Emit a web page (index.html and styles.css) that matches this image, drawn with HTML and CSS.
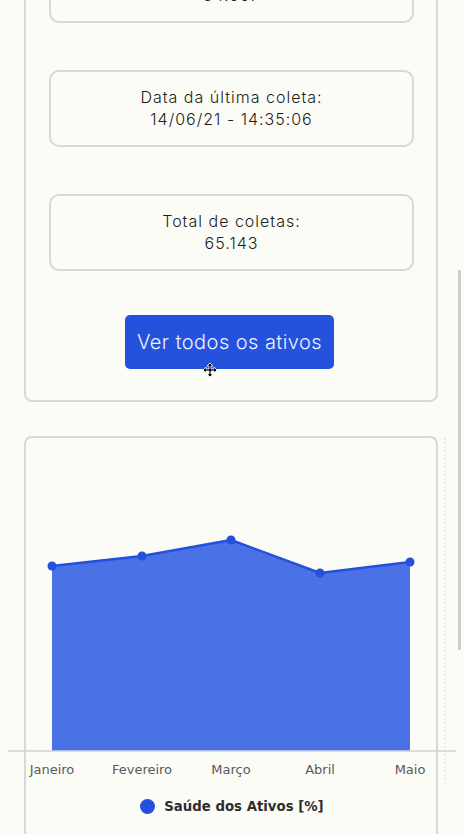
FILE: index.html
```html
<!DOCTYPE html>
<html lang="pt-BR">
<head>
<meta charset="utf-8">
<title>Ativos</title>
<link rel="stylesheet" href="styles.css">
</head>
<body>
<main class="page">
  <section class="panel panel-info">
    <div class="stat">
      <p>Número de ativos:</p>
      <p>34.567</p>
    </div>
    <div class="stat">
      <p>Data da última coleta:</p>
      <p>14/06/21 - 14:35:06</p>
    </div>
    <div class="stat">
      <p>Total de coletas:</p>
      <p>65.143</p>
    </div>
    <div class="actions">
      <button class="btn">Ver todos os ativos</button>
    </div>
  </section>

  <section class="panel panel-chart">
    <svg class="chart" width="448" height="345" viewBox="0 0 448 345">
      <line x1="437" y1="0" x2="437" y2="345" class="grid"/>
      <polygon class="area" points="44,128 134,118 223,102 312,135 402,124 402,313 44,313"/>
      <polyline class="line" points="44,128 134,118 223,102 312,135 402,124"/>
      <circle cx="44" cy="128" r="4.5" class="dot"/>
      <circle cx="134" cy="118" r="4.5" class="dot"/>
      <circle cx="223" cy="102" r="4.5" class="dot"/>
      <circle cx="312" cy="135" r="4.5" class="dot"/>
      <circle cx="402" cy="124" r="4.5" class="dot"/>
      <line x1="0" y1="313" x2="448" y2="313" class="axis"/>
      <text x="44" y="336" class="tick">Janeiro</text>
      <text x="134" y="336" class="tick">Fevereiro</text>
      <text x="223" y="336" class="tick">Março</text>
      <text x="312" y="336" class="tick">Abril</text>
      <text x="402" y="336" class="tick">Maio</text>
    </svg>
    <div class="legend">
      <span class="legend-dot"></span>
      <span class="legend-text">Saúde dos Ativos [%]</span>
    </div>
  </section>
</main>
<div class="scrollbar"></div>
<svg class="cursor" width="14" height="14" viewBox="0 0 14 14">
  <path d="M7 0 L10 3 H8 V6 H11 V4 L14 7 L11 10 V8 H8 V11 H10 L7 14 L4 11 H6 V8 H3 V10 L0 7 L3 4 V6 H6 V3 H4 Z" fill="#000" stroke="#fff" stroke-width="0.8"/>
</svg>
</body>
</html>
```

FILE: styles.css
```css
* { box-sizing: border-box; }

html, body {
  margin: 0;
  padding: 0;
  background: #fcfcf7;
  overflow: hidden;
}

body {
  font-family: "Inter", "Liberation Sans", sans-serif;
  color: #1c1c1c;
  height: 834px;
}

.page {
  display: flex;
  flex-direction: column;
  gap: 34px;
  padding: 0 26px 0 24px;
  margin-top: -78px;
}

.panel {
  border: 2px solid #d7d7dc;
  border-radius: 8px;
}

.panel-info {
  display: flex;
  flex-direction: column;
  gap: 47px;
  padding: 22px 22px 31px 23px;
}

.stat {
  border: 2px solid #d7d7dc;
  border-radius: 10px;
  padding: 14px 8px 15px;
  text-align: center;
  font-weight: 300;
  font-size: 16px;
  line-height: 22px;
  letter-spacing: 1px;
}

.stat p { margin: 0; }

.actions {
  display: flex;
  justify-content: center;
  margin-top: -3px;
}

.btn {
  font-family: "Inter", "Liberation Sans", sans-serif;
  font-weight: 300;
  font-size: 20px;
  letter-spacing: 0.45px;
  color: #eef1ff;
  background: #2452dc;
  border: none;
  border-radius: 5px;
  width: 209px;
  height: 54px;
  padding: 0;
  margin-left: -4px;
}

.panel-chart {
  border-bottom: none;
  border-radius: 8px 8px 0 0;
  height: 420px;
  padding-top: 0;
}

.chart {
  display: block;
  margin-left: -18px;
  overflow: visible;
}

.grid {
  stroke: #d8d8de;
  stroke-width: 1;
  stroke-dasharray: 2 2;
}

.axis {
  stroke: #d2d2d8;
  stroke-width: 1.5;
}

.area { fill: #4a72e6; }

.line {
  fill: none;
  stroke: #2350dc;
  stroke-width: 2.5;
  stroke-linejoin: round;
}

.dot { fill: #2350dc; }

.tick {
  font-family: "DejaVu Sans", "Liberation Sans", sans-serif;
  font-size: 13px;
  fill: #595959;
  text-anchor: middle;
}

.legend {
  display: flex;
  align-items: center;
  justify-content: center;
  gap: 9px;
  margin-top: 16px;
  margin-left: 2px;
}

.legend-dot {
  width: 15px;
  height: 15px;
  border-radius: 50%;
  background: #2350dc;
}

.legend-text {
  font-family: "DejaVu Sans", "Liberation Sans", sans-serif;
  font-weight: bold;
  font-size: 13.3px;
  color: #2e2e2e;
}

.scrollbar {
  position: fixed;
  top: 270px;
  left: 458px;
  width: 3px;
  height: 380px;
  background: #cfcfcf;
}

.cursor {
  position: fixed;
  left: 203px;
  top: 363px;
}
```
